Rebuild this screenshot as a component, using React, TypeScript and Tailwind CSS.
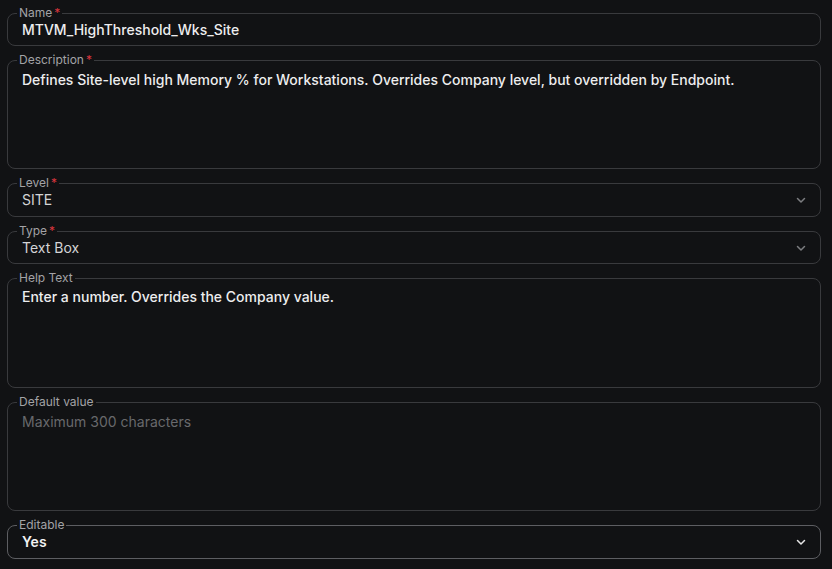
import React from 'react';

type FieldProps = {
  label: string;
  required?: boolean;
  height: string;
  focused?: boolean;
  children: React.ReactNode;
};

function Field({ label, required, height, focused, children }: FieldProps) {
  return (
    <fieldset
      className={`relative rounded-lg border px-[14px] ${height} ${
        focused ? 'border-[#5d5e62]' : 'border-[#393a3d]'
      }`}
    >
      <legend className="ml-[-5px] px-[2px] text-[12px] leading-[14px] text-[#a3a3a6]">
        {label}
        {required && <span className="ml-[2px] text-[#d9363e]">*</span>}
      </legend>
      {children}
    </fieldset>
  );
}

function Chevron({ bright }: { bright?: boolean }) {
  return (
    <svg
      className={`absolute right-[13px] top-[calc(50%-6px)] h-[12px] w-[12px] ${
        bright ? 'text-[#e6e6e6]' : 'text-[#7c7d80]'
      }`}
      viewBox="0 0 24 24"
      fill="none"
      stroke="currentColor"
      strokeWidth="3"
      strokeLinecap="round"
      strokeLinejoin="round"
    >
      <path d="M5 9l7 7 7-7" />
    </svg>
  );
}

export default function App() {
  return (
    <div
      className="min-h-[569px] bg-[#111214] pl-[7px] pr-[11px] pt-[6px] flex flex-col gap-[7px]"
      style={{ fontFamily: 'Inter, "Noto Sans", sans-serif' }}
    >
      <Field label="Name" required height="h-[40px]">
        <div className="text-[14px] leading-[19px] font-medium text-[#ededee]">
          MTVM_HighThreshold_Wks_Site
        </div>
      </Field>

      <Field label="Description" required height="h-[116px]">
        <div className="mt-[3px] text-[14px] leading-[20px] font-medium text-[#ededee]">
          Defines Site-level high Memory % for Workstations. Overrides Company level, but overridden by
          Endpoint.
        </div>
      </Field>

      <Field label="Level" required height="h-[41px]">
        <div className="text-[14px] leading-[19px] text-[#d4d4d6]">SITE</div>
        <Chevron />
      </Field>

      <Field label="Type" required height="h-[40px]">
        <div className="text-[14px] leading-[19px] text-[#d4d4d6]">Text Box</div>
        <Chevron />
      </Field>

      <Field label="Help Text" height="h-[117px]">
        <div className="mt-[2px] text-[14px] leading-[20px] font-medium text-[#ededee]">
          Enter a number. Overrides the Company value.
        </div>
      </Field>

      <Field label="Default value" height="h-[116px]">
        <div className="mt-[3px] text-[14px] leading-[20px] text-[#68696c]">
          Maximum 300 characters
        </div>
      </Field>

      <Field label="Editable" height="h-[41px]" focused>
        <div className="text-[14px] leading-[19px] font-semibold text-[#f2f2f3]">Yes</div>
        <Chevron bright />
      </Field>
    </div>
  );
}
